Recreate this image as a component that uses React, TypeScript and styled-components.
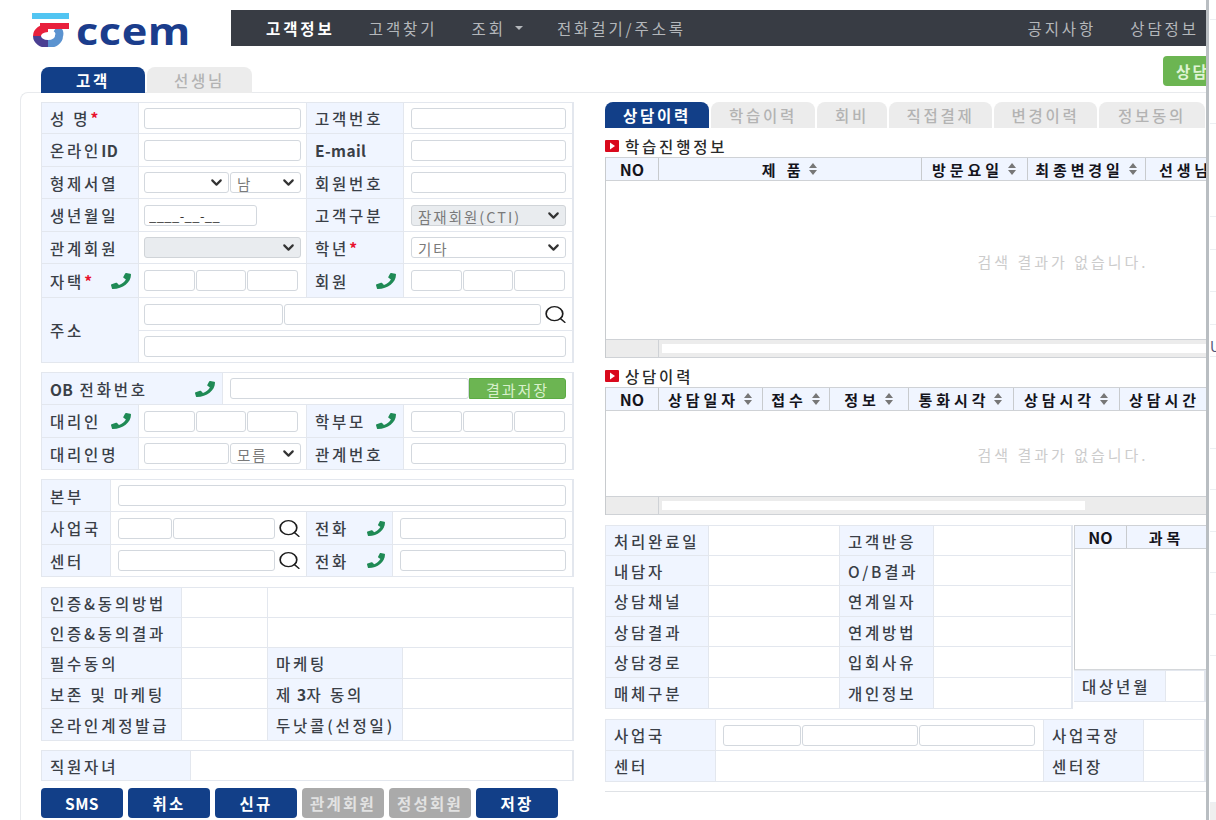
import {Fragment} from "react";
import styled, {createGlobalStyle} from "styled-components";
import {FaPhone} from "react-icons/fa";
import {ChevronDown, Search} from "lucide-react";
import type {ReactNode} from "react";

const GlobalStyle = createGlobalStyle`
    html, body {
        margin: 0;
        padding: 0;
        background: #fff;
    }

    * {
        box-sizing: border-box;
    }

    body, input, select, button {
        font-family: "Noto Sans CJK KR", "Noto Sans", sans-serif;
    }
`;

const Page = styled.div`
    width: 1216px;
    height: 820px;
    overflow: hidden;
    display: flex;
    color: #333;
    font-size: 15.5px;
    letter-spacing: 2.8px;
`;

const Main = styled.div`
    width: 1206px;
    flex: none;
    overflow: hidden;
    display: flex;
    flex-direction: column;
`;

const Divider = styled.div`
    width: 3px;
    flex: none;
    background: #b9bec2;
`;

const SideStrip = styled.div`
    flex: 1;
    display: flex;
    flex-direction: column;
    margin-left: 1px;
    overflow: hidden;
`;

const SideRow = styled.div<{ $h: number }>`
    height: ${p => p.$h}px;
    flex: none;
    border-bottom: 1px solid #eceff2;
    display: flex;
    align-items: flex-end;
    font-size: 14px;
    letter-spacing: 0;
    color: #557;
`;

const SideEnd = styled.div`
    flex: 1;
    background: #efefef;
`;

const Header = styled.header`
    display: flex;
    height: 46px;
    padding-top: 10px;
    flex: none;
`;

const LogoArea = styled.div`
    width: 231px;
    flex: none;
    display: flex;
    align-items: flex-start;
    padding: 3px 0 0 32px;
    gap: 7px;
`;

const LogoText = styled.span`
    font-family: "Open Sans", sans-serif;
    font-weight: 700;
    font-size: 38px;
    line-height: 34px;
    letter-spacing: 0.5px;
    color: #1b3d8c;
    transform: scaleX(1.14);
    transform-origin: left center;
`;

const TopNav = styled.nav`
    flex: 1;
    background: #383c44;
    display: flex;
    align-items: center;
    gap: 37px;
    padding: 0 10px 0 35px;
`;

const NavItem = styled.a<{ $active?: boolean; $push?: boolean }>`
    color: ${p => p.$active ? "#fff" : "#b4b7bb"};
    font-weight: ${p => p.$active ? 700 : 400};
    white-space: nowrap;
    letter-spacing: 2.9px;
    margin-left: ${p => p.$push ? "auto" : 0};
    margin-right: -2.9px;
    display: flex;
    align-items: center;
`;

const Caret = styled.span`
    width: 0;
    height: 0;
    margin-left: 9px;
    border-left: 4px solid transparent;
    border-right: 4px solid transparent;
    border-top: 4px solid #b4b7bb;
`;

const TabBar = styled.div`
    height: 37px;
    margin-top: 10px;
    margin-bottom: -1px;
    flex: none;
    position: relative;
    z-index: 1;
    display: flex;
    justify-content: space-between;
    padding-left: 41px;
`;

const Tabs = styled.div`
    display: flex;
    gap: 2px;
    align-self: flex-end;
`;

const Tab = styled.div<{ $active?: boolean; $w: number }>`
    width: ${p => p.$w}px;
    height: 26px;
    border-radius: 8px 8px 0 0;
    background: ${p => p.$active ? "#123f88" : "#ececec"};
    color: ${p => p.$active ? "#fff" : "#b3b3b3"};
    font-weight: ${p => p.$active ? 700 : 500};
    display: flex;
    align-items: center;
    justify-content: center;
`;

const GreenAction = styled.button`
    width: 60px;
    height: 30px;
    margin-right: -17px;
    border: 0;
    border-radius: 4px;
    background: #6cb552;
    color: #dff3d4;
    font-size: 15.5px;
    font-weight: 700;
    letter-spacing: 2.3px;
    white-space: nowrap;
    text-align: left;
    padding: 0 0 0 13px;
`;

const Panel = styled.div`
    flex: 1;
    margin-left: 20px;
    border: 1px solid #e8eaed;
    border-width: 1px 0 0 1px;
    border-radius: 8px 0 0 0;
    padding: 9px 0 0 20px;
    display: flex;
    gap: 31px;
    min-height: 0;
`;

const LeftColumn = styled.div`
    width: 533px;
    flex: none;
    display: flex;
    flex-direction: column;
`;

const RightColumn = styled.div`
    flex: 1;
    min-width: 0;
    display: flex;
    flex-direction: column;
    overflow: hidden;
`;

const FormTable = styled.div<{ $cols: string; $rows: string; $gap?: number }>`
    display: grid;
    grid-template-columns: ${p => p.$cols};
    grid-template-rows: ${p => p.$rows};
    border: 1px solid #e3e7ee;
    border-width: 1px 1px 0 1px;
    margin-bottom: ${p => p.$gap ?? 0}px;
    flex: none;
`;

const Th = styled.div<{ $span?: number; $rowSpan?: number; $between?: boolean }>`
    grid-column: span ${p => p.$span ?? 1};
    grid-row: span ${p => p.$rowSpan ?? 1};
    background: #f0f5ff;
    border: 1px solid #e3e7ee;
    border-width: 0 1px 1px 0;
    padding: 0 7px 0 8px;
    display: flex;
    align-items: center;
    justify-content: ${p => p.$between ? "space-between" : "flex-start"};
    font-weight: 500;
    white-space: nowrap;
    overflow: hidden;
    color: #3a3f47;
`;

const Td = styled.div<{ $span?: number; $wide?: boolean }>`
    grid-column: span ${p => p.$span ?? 1};
    border: 1px solid #e3e7ee;
    border-width: 0 1px 1px 0;
    padding: ${p => p.$wide ? "0 6px 0 7px" : "0 5px"};
    display: flex;
    align-items: center;
    gap: 1px;
    min-width: 0;
`;

const Mark = styled.span`
    color: #e8112d;
    font-weight: 700;
    letter-spacing: 0;
`;

const Latin = styled.span`
    font-weight: 700;
    letter-spacing: 0.4px;
`;

const Field = styled.input<{ $w?: number }>`
    ${p => p.$w ? `width: ${p.$w}px; flex: none;` : "flex: 1; width: 0; min-width: 0;"}
    height: 21px;
    border: 1px solid #d3d8de;
    border-radius: 3px;
    background: #fff;
    padding: 0 4px;
    font-size: 13px;
    letter-spacing: 0.4px;
    color: #333;
    outline: none;
`;

const SelectBox = styled.div<{ $w?: number }>`
    ${p => p.$w ? `width: ${p.$w}px; flex: none;` : "flex: 1; width: 0; min-width: 0;"}
    position: relative;
    display: flex;
`;

const NativeSelect = styled.select<{ $off?: boolean }>`
    appearance: none;
    width: 100%;
    height: 21px;
    border: 1px solid ${p => p.$off ? "#d0d4d8" : "#d3d8de"};
    border-radius: 3px;
    background: ${p => p.$off ? "#e9ecef" : "#fff"};
    padding: 0 6px;
    font-size: 14.5px;
    letter-spacing: 2px;
    color: #7a7a7a;
    opacity: 1;
`;

const SelectArrow = styled(ChevronDown)`
    position: absolute;
    right: 3px;
    top: 2px;
    width: 19px;
    height: 17px;
    color: #333;
    pointer-events: none;
`;

const TelGroup = styled.div`
    width: 154px;
    display: flex;
    gap: 1px;
`;

const SaveButton = styled.button`
    width: 97px;
    height: 21px;
    flex: none;
    margin-left: -1px;
    border: 1px solid #5cab44;
    border-radius: 0 3px 3px 0;
    background: #6cb552;
    color: #d9f0cc;
    font-size: 15px;
    letter-spacing: 2px;
    padding: 0;
`;

const ActionRow = styled.div`
    display: flex;
    gap: 5px;
    flex: none;
    margin-top: 7px;
`;

const ActionButton = styled.button<{ $off?: boolean }>`
    width: 82px;
    height: 30px;
    border: 0;
    border-radius: 4px;
    background: ${p => p.$off ? "#aaaaaa" : "#123f88"};
    color: ${p => p.$off ? "#e2e2e2" : "#fff"};
    font-size: 15.5px;
    font-weight: 700;
    letter-spacing: 2.3px;
    padding: 0;
`;

const DetailTabs = styled.div`
    display: flex;
    gap: 2px;
    height: 26px;
    flex: none;
`;

const SectionTitle = styled.div`
    height: 29px;
    flex: none;
    display: flex;
    align-items: center;
    gap: 6px;
    padding-top: 7px;
    font-weight: 500;
    color: #2a2a2a;
`;

const SectionIcon = styled.svg`
    width: 14px;
    height: 12px;
    flex: none;
`;

const GridFrame = styled.div`
    border-left: 1px solid #c8cbce;
    flex: none;
`;

const GridHead = styled.div<{ $cols: string }>`
    display: grid;
    grid-template-columns: ${p => p.$cols};
    height: 24px;
    background: #f0f5ff;
    border: 1px solid #cfd2d6;
    border-width: 1px 0 1px 0;
`;

const GridTh = styled.div`
    border-right: 1px solid #c8cbce;
    display: flex;
    align-items: center;
    justify-content: center;
    gap: 4px;
    white-space: nowrap;
    overflow: hidden;
    color: #14141c;
    font-size: 15px;
    font-weight: 700;
    letter-spacing: 3.9px;
`;

const GridNo = styled.span`
    font-size: 16px;
    letter-spacing: 0;
`;

const GridBody = styled.div<{ $h: number }>`
    height: ${p => p.$h}px;
    padding-top: 2px;
    overflow: hidden;
    display: flex;
    align-items: center;
`;

const EmptyMessage = styled.div`
    width: 914px;
    flex: none;
    text-align: center;
    font-size: 15px;
    letter-spacing: 3px;
    color: #ccc;
`;

const GridFooter = styled.div`
    height: 19px;
    display: flex;
    background: #ececec;
    border: 1px solid #cfd2d6;
    border-width: 1px 0;
`;

const FooterCorner = styled.div`
    width: 53px;
    flex: none;
    border-right: 1px solid #cfd2d6;
`;

const ScrollTrack = styled.div`
    flex: 1;
    padding: 4px 0 4px 3px;
`;

const ScrollThumb = styled.div<{ $w: number }>`
    height: 100%;
    width: ${p => p.$w}px;
    background: #fff;
`;

const SortGlyph = styled.svg`
    width: 10px;
    height: 14px;
    flex: none;
`;

const BottomSplit = styled.div`
    display: flex;
    gap: 1px;
    margin-top: 10px;
    margin-bottom: 10px;
    flex: none;
`;

const InfoColumn = styled.div`
    width: 468px;
    flex: none;
`;

const MiniColumn = styled.div`
    flex: 1;
    min-width: 0;
    display: flex;
    flex-direction: column;
`;

const MiniBody = styled.div`
    height: 121px;
    border-left: 1px solid #c8cbce;
    border-bottom: 1px solid #d4d7da;
`;

const MiniHead = styled(GridHead)`
    border-left: 1px solid #cfd2d6;
`;

const MiniRow = styled(FormTable)`
    border-left: 0;
`;

const ClosingLine = styled.div`
    height: 1px;
    background: #dfe2e6;
    margin-top: 9px;
    flex: none;
`;

const PhoneGlyph = styled(FaPhone)<{ $small?: boolean }>`
    width: ${p => p.$small ? 18 : 20}px;
    height: ${p => p.$small ? 15 : 16}px;
    flex: none;
    color: #1f8a55;
`;

const LensGlyph = styled(Search)`
    width: 25px;
    height: 21px;
    flex: none;
    margin-left: 1px;
    margin-right: -3px;
    color: #1c1c1c;
`;

const Phone = ({small}: { small?: boolean }) => <PhoneGlyph $small={small} preserveAspectRatio="none"/>;

const Lens = () => <LensGlyph strokeWidth={1.6} preserveAspectRatio="none"/>;

const Dropdown = ({w, off, value = ""}: { w?: number; off?: boolean; value?: string }) => (
    <SelectBox $w={w}>
      <NativeSelect $off={off} disabled={off}><option>{value}</option></NativeSelect>
      <SelectArrow strokeWidth={3}/>
    </SelectBox>
);

const LogoMark = () => (
    <svg width="37" height="34" viewBox="0 0 37 34">
      <rect x="0" y="0" width="37" height="6" fill="#52c5f2"/>
      <g fill="none" strokeWidth="8">
        <path d="M5 23A11 8 0 0 1 16 15" stroke="#e8203c"/>
        <path d="M5 23A11 8 0 0 0 16 31" stroke="#4a3f92"/>
        <path d="M16 31A11 8 0 0 0 27 23A11 8 0 0 0 24 15" stroke="#5b93d0"/>
      </g>
      <rect x="8" y="10" width="29" height="6" fill="#e8203c"/>
    </svg>
);

const Sort = () => (
    <SortGlyph viewBox="0 0 10 14">
      <path d="M5 1l4 5H1z M5 13l4-5H1z" fill="#777"/>
    </SortGlyph>
);

const SectionMark = () => (
    <SectionIcon viewBox="0 0 14 12">
      <rect width="14" height="12" rx="1" fill="#d9091c"/>
      <path d="M5 2.500l5 3.500-5 3.500z" fill="#fff"/>
    </SectionIcon>
);

const Tel = () => (
    <TelGroup>
      <Field/>
      <Field/>
      <Field/>
    </TelGroup>
);

function Heading({label, sort = true}: { label: ReactNode; sort?: boolean }) {
  return <GridTh>{label}{sort && <Sort/>}</GridTh>;
}

const sideHeights = [20, 104, 93, 33, 42, 33, 32, 92, 41, 42, 41, 42, 41, 147];
const firstHeads = ["NO", "제 품", "방문요일", "최종변경일", "선생님"];
const secondHeads = ["NO", "상담일자", "접수", "정보", "통화시각", "상담시각", "상담시간"];
const infoRows = [
  ["처리완료일", "고객반응"],
  ["내담자", "O/B결과"],
  ["상담채널", "연계일자"],
  ["상담결과", "연계방법"],
  ["상담경로", "입회사유"],
  ["매체구분", "개인정보"],
];
const detailTabs: [string, number][] = [["학습이력", 104], ["회비", 70], ["직접결제", 103], ["변경이력", 103], ["정보동의", 106]];

export default function App() {
  return <Page>
    <GlobalStyle/>
    <Main>
      <Header>
        <LogoArea>
          <LogoMark/>
          <LogoText>ccem</LogoText>
        </LogoArea>
        <TopNav>
          <NavItem $active>고객정보</NavItem>
          <NavItem>고객찾기</NavItem>
          <NavItem>조회<Caret/></NavItem>
          <NavItem>전화걸기/주소록</NavItem>
          <NavItem $push>공지사항</NavItem>
          <NavItem>상담정보</NavItem>
        </TopNav>
      </Header>

      <TabBar>
        <Tabs>
          <Tab $active $w={104}>고객</Tab>
          <Tab $w={105}>선생님</Tab>
        </Tabs>
        <GreenAction>상담</GreenAction>
      </TabBar>

      <Panel>
        <LeftColumn>
          <FormTable $cols="97px 168px 97px 169px" $rows="31px 33px 32px 33px 32px 34px 33px 32px" $gap={9}>
            <Th>성 명<Mark>*</Mark></Th><Td><Field/></Td>
            <Th>고객번호</Th><Td $wide><Field/></Td>
            <Th>온라인<Latin>ID</Latin></Th><Td><Field/></Td>
            <Th><Latin>E-mail</Latin></Th><Td $wide><Field/></Td>
            <Th>형제서열</Th>
            <Td>
              <Dropdown w={85}/>
              <Dropdown value="남"/>
            </Td>
            <Th>회원번호</Th><Td $wide><Field/></Td>
            <Th>생년월일</Th><Td><Field $w={113} readOnly value="____-__-__"/></Td>
            <Th>고객구분</Th>
            <Td $wide><Dropdown off value="잠재회원(CTI)"/></Td>
            <Th>관계회원</Th><Td><Dropdown off/></Td>
            <Th>학년<Mark>*</Mark></Th>
            <Td $wide><Dropdown value="기타"/></Td>
            <Th $between><span>자택<Mark>*</Mark></span><Phone/></Th><Td><Tel/></Td>
            <Th $between>회원<Phone/></Th><Td $wide><Tel/></Td>
            <Th $rowSpan={2}>주소</Th>
            <Td $span={3}>
              <Field $w={139}/>
              <Field $w={257}/>
              <Lens/>
            </Td>
            <Td $span={3}><Field $w={422}/></Td>
          </FormTable>

          <FormTable $cols="97px 84px 84px 97px 169px" $rows="32px 33px 32px" $gap={9}>
            <Th $span={2} $between><span><Latin>OB</Latin> 전화번호</span><Phone/></Th>
            <Td $span={3} $wide>
              <Field/>
              <SaveButton>결과저장</SaveButton>
            </Td>
            <Th $between>대리인<Phone/></Th><Td $span={2}><Tel/></Td>
            <Th $between>학부모<Phone/></Th><Td $wide><Tel/></Td>
            <Th>대리인명</Th>
            <Td $span={2}>
              <Field $w={85}/>
              <Dropdown value="모름"/>
            </Td>
            <Th>관계번호</Th><Td $wide><Field/></Td>
          </FormTable>

          <FormTable $cols="69px 196px 86px 180px" $rows="32px 33px 32px" $gap={10}>
            <Th>본부</Th><Td $span={3} $wide><Field/></Td>
            <Th>사업국</Th>
            <Td $wide>
              <Field $w={54}/>
              <Field $w={102}/>
              <Lens/>
            </Td>
            <Th $between>전화<Phone small/></Th><Td $wide><Field/></Td>
            <Th>센터</Th>
            <Td $wide>
              <Field $w={157}/>
              <Lens/>
            </Td>
            <Th $between>전화<Phone small/></Th><Td $wide><Field/></Td>
          </FormTable>

          <FormTable $cols="140px 86px 135px 1fr" $rows="30px 30px 31px 30px 32px" $gap={9}>
            <Th>인증&amp;동의방법</Th><Td/><Td $span={2}/>
            <Th>인증&amp;동의결과</Th><Td/><Td $span={2}/>
            <Th>필수동의</Th><Td/><Th>마케팅</Th><Td/>
            <Th>보존 및 마케팅</Th><Td/><Th>제 <Latin>&nbsp;3</Latin>자 동의</Th><Td/>
            <Th>온라인계정발급</Th><Td/><Th>두낫콜(선정일)</Th><Td/>
          </FormTable>

          <FormTable $cols="149px 1fr" $rows="30px">
            <Th>직원자녀</Th><Td/>
          </FormTable>

          <ActionRow>
            <ActionButton><Latin>SMS</Latin></ActionButton>
            <ActionButton>취소</ActionButton>
            <ActionButton>신규</ActionButton>
            <ActionButton $off>관계회원</ActionButton>
            <ActionButton $off>정성회원</ActionButton>
            <ActionButton>저장</ActionButton>
          </ActionRow>
        </LeftColumn>

        <RightColumn>
          <DetailTabs>
            <Tab $active $w={104}>상담이력</Tab>
            {detailTabs.map(([label, width]) => <Tab key={label} $w={width}>{label}</Tab>)}
          </DetailTabs>

          <SectionTitle><SectionMark/>학습진행정보</SectionTitle>
          <GridFrame>
            <GridHead $cols="53px 263px 106px 118px 80px">
              {firstHeads.map((head, i) =>
                  <Heading key={head} label={i === 0 ? <GridNo>{head}</GridNo> : head} sort={i > 0 && i < 4}/>)}
            </GridHead>
            <GridBody $h={158}><EmptyMessage>검색 결과가 없습니다.</EmptyMessage></GridBody>
            <GridFooter>
              <FooterCorner/>
              <ScrollTrack><ScrollThumb $w={560}/></ScrollTrack>
            </GridFooter>
          </GridFrame>

          <SectionTitle><SectionMark/>상담이력</SectionTitle>
          <GridFrame>
            <GridHead $cols="53px 104px 67px 79px 105px 106px 90px">
              {secondHeads.map((head, i) =>
                  <Heading key={head} label={i === 0 ? <GridNo>{head}</GridNo> : head} sort={i > 0 && i < 6}/>)}
            </GridHead>
            <GridBody $h={85}><EmptyMessage>검색 결과가 없습니다.</EmptyMessage></GridBody>
            <GridFooter>
              <FooterCorner/>
              <ScrollTrack><ScrollThumb $w={423}/></ScrollTrack>
            </GridFooter>
          </GridFrame>

          <BottomSplit>
            <InfoColumn>
              <FormTable $cols="103px 131px 94px 1fr" $rows="30px 30px 31px 30px 31px 31px">
                {infoRows.map(([first, second]) => <Fragment key={first}>
                  <Th>{first}</Th><Td/>
                  <Th>{second}</Th><Td/>
                </Fragment>)}
              </FormTable>
            </InfoColumn>
            <MiniColumn>
              <MiniHead $cols="52px 80px">
                <Heading label={<GridNo>NO</GridNo>} sort={false}/>
                <Heading label="과목" sort={false}/>
              </MiniHead>
              <MiniBody/>
              <MiniRow $cols="92px 1fr" $rows="31px">
                <Th>대상년월</Th><Td/>
              </MiniRow>
            </MiniColumn>
          </BottomSplit>

          <FormTable $cols="110px 328px 100px 1fr" $rows="31px 31px">
            <Th>사업국</Th>
            <Td $wide>
              <Field $w={78}/>
              <Field $w={116}/>
              <Field $w={116}/>
            </Td>
            <Th>사업국장</Th><Td/>
            <Th>센터</Th><Td/>
            <Th>센터장</Th><Td/>
          </FormTable>
          <ClosingLine/>
        </RightColumn>
      </Panel>
    </Main>
    <Divider/>
    <SideStrip>
      {sideHeights.map((height, i) => <SideRow key={i} $h={height}>{i === 6 ? "U" : ""}</SideRow>)}
      <SideEnd/>
    </SideStrip>
  </Page>;
}
